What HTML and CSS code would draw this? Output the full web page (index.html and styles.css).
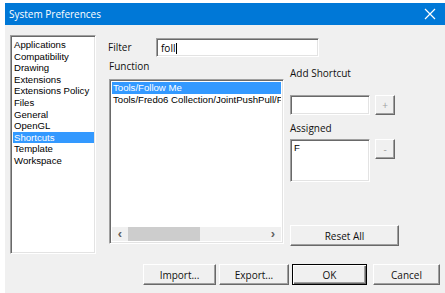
FILE: index.html
```html
<!DOCTYPE html>
<html lang="en">
<head>
    <meta charset="UTF-8">
    <title>System Preferences</title>
    <link rel="stylesheet" href="styles.css">
</head>
<body>
    <div class="dialog">
        <div class="titlebar">
            <span class="title">System Preferences</span>
            <svg class="close" width="12" height="12" viewBox="0 0 12 12">
                <path d="M1 1 L11 11 M11 1 L1 11" stroke="#fff" stroke-width="1.2" fill="none"/>
            </svg>
        </div>

        <div class="content">
            <div class="listbox categories">
                <div class="item">Applications</div>
                <div class="item">Compatibility</div>
                <div class="item">Drawing</div>
                <div class="item">Extensions</div>
                <div class="item">Extensions Policy</div>
                <div class="item">Files</div>
                <div class="item">General</div>
                <div class="item">OpenGL</div>
                <div class="item selected">Shortcuts</div>
                <div class="item">Template</div>
                <div class="item">Workspace</div>
            </div>

            <div class="main">
                <div class="filter-row">
                    <span class="label filter-label">Filter</span>
                    <div class="textbox filter-box">foll<span class="caret"></span></div>
                </div>

                <div class="columns">
                    <div class="func-col">
                        <div class="label func-label">Function</div>
                        <div class="listbox functions">
                            <div class="rows">
                                <div class="item selected">Tools/Follow Me</div>
                                <div class="item">Tools/Fredo6 Collection/JointPushPull/F</div>
                            </div>
                            <div class="hscroll">
                                <span class="arrow">&lsaquo;</span>
                                <div class="track"><div class="thumb"></div></div>
                                <span class="arrow">&rsaquo;</span>
                            </div>
                        </div>
                    </div>

                    <div class="shortcut-col">
                        <div class="label add-label">Add Shortcut</div>
                        <div class="key-row">
                            <div class="textbox key-box"></div>
                            <button class="btn small disabled">+</button>
                        </div>
                        <div class="label assigned-label">Assigned</div>
                        <div class="key-row">
                            <div class="listbox assigned"><div class="item">F</div></div>
                            <button class="btn small disabled">-</button>
                        </div>
                        <button class="btn reset">Reset All</button>
                    </div>
                </div>
            </div>
        </div>

        <div class="buttons">
            <button class="btn import">Import...</button>
            <button class="btn export">Export...</button>
            <button class="btn default">OK</button>
            <button class="btn cancel">Cancel</button>
        </div>
    </div>
</body>
</html>
```

FILE: styles.css
```css
body {
    margin: 0;
    background: #fff;
    font-family: "Liberation Sans", Arial, sans-serif;
    font-size: 9.6px;
    color: #000;
}
.dialog {
    margin: 3px 0 0 5px;
    width: 440px;
    height: 290px;
    background: #f0f0f0;
}
.titlebar {
    height: 22px;
    background: #0078d7;
    color: #fff;
    display: flex;
    align-items: center;
    justify-content: space-between;
    padding: 0 9px 0 4px;
    font-family: "Open Sans", sans-serif;
    font-size: 10px;
}
.close {
    display: block;
}
.content {
    display: flex;
    padding: 10px 0 0 5px;
}
.listbox,
.textbox {
    box-sizing: border-box;
    background: #fff;
    border-top: 1px solid #a0a0a0;
    border-left: 1px solid #a0a0a0;
    border-right: 1px solid #fff;
    border-bottom: 1px solid #fff;
    box-shadow: inset 1px 1px 0 #696969, inset -1px -1px 0 #e3e3e3;
}
.item {
    height: 11.6px;
    line-height: 11.6px;
    padding-left: 1px;
    white-space: nowrap;
}
.item.selected {
    background: #3399ff;
    color: #fff;
}
.categories {
    width: 86px;
    height: 219px;
    padding: 3px 1px 0 2px;
}
.main {
    margin-left: 12px;
}
.label {
    height: 13px;
    line-height: 13px;
    font-family: "Open Sans", sans-serif;
    font-size: 10px;
    color: #111;
}
.filter-row {
    display: flex;
    align-items: center;
    margin-top: 3px;
    height: 19px;
}
.filter-label {
    width: 48px;
}
.filter-box {
    width: 163px;
    height: 19px;
    padding: 2px 0 0 4px;
    font-family: "Open Sans", sans-serif;
    font-size: 10px;
    line-height: 14px;
    display: flex;
    align-items: flex-start;
}
.caret {
    display: inline-block;
    width: 1px;
    height: 11px;
    margin: 2px 0 0 1px;
    background: #000;
}
.columns {
    display: flex;
    margin-top: 3px;
}
.func-col {
    margin-left: 1px;
}
.func-label {
    margin-bottom: 6px;
}
.functions {
    width: 175px;
    height: 165px;
    padding: 2px;
    display: flex;
    flex-direction: column;
}
.rows {
    flex: 1;
    overflow: hidden;
}
.hscroll {
    height: 14px;
    display: flex;
    align-items: center;
    background: #f0f0f0;
}
.arrow {
    width: 16px;
    text-align: center;
    font-size: 13px;
    line-height: 14px;
    color: #606060;
    font-weight: bold;
}
.track {
    flex: 1;
    height: 14px;
}
.thumb {
    width: 72px;
    height: 14px;
    background: #cdcdcd;
}
.shortcut-col {
    margin-left: 6px;
    padding-top: 7px;
    display: flex;
    flex-direction: column;
}
.add-label {
    margin-bottom: 15px;
}
.key-row {
    display: flex;
    align-items: flex-start;
}
.key-box {
    width: 80px;
    height: 20px;
}
.assigned-label {
    margin: 7px 0 4px;
}
.assigned {
    width: 80px;
    height: 43px;
    padding: 2px 0 0 2px;
}
.btn {
    box-sizing: border-box;
    background: #f0f0f0;
    border-top: 1px solid #fff;
    border-left: 1px solid #fff;
    border-right: 1px solid #696969;
    border-bottom: 1px solid #696969;
    box-shadow: inset -1px -1px 0 #a0a0a0;
    font-family: "Open Sans", sans-serif;
    font-size: 10px;
    color: #111;
    padding: 0;
    height: 21px;
    width: 74px;
}
.btn.small {
    width: 20px;
    height: 20px;
    margin-left: 5px;
}
.btn.disabled {
    color: #a0a0a0;
}
.btn.reset {
    width: 109px;
    margin-top: 43px;
}
.btn.default {
    border: 1px solid #000;
    box-shadow: inset 1px 1px 0 #fff, inset -1px -1px 0 #696969, inset -2px -2px 0 #a0a0a0;
}
.buttons {
    display: flex;
    gap: 3px;
    margin-top: 10px;
    padding-left: 138px;
}
.btn.import {
    width: 73px;
}
.btn.export {
    width: 70px;
}
.btn.default {
    width: 75px;
}
.btn.cancel {
    margin-left: 3px;
    width: 67px;
}
```
